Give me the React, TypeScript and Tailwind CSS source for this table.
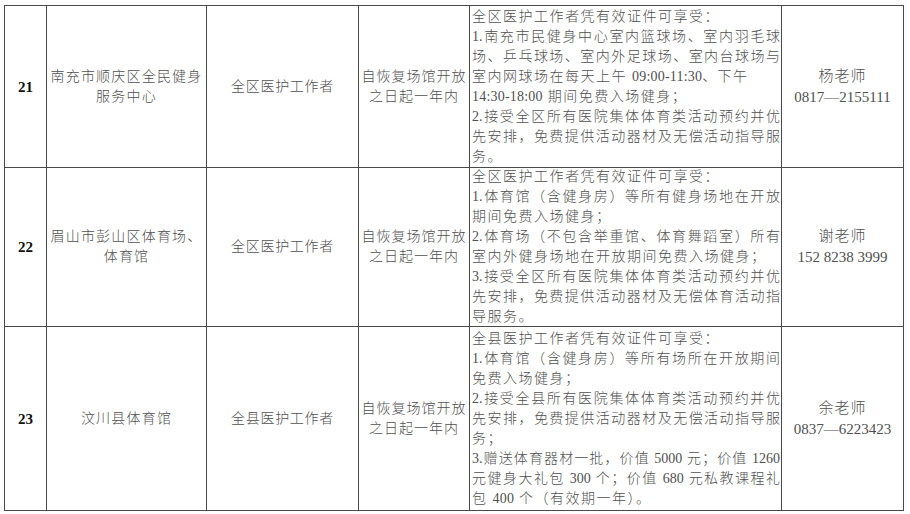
import React from "react";

type Ln = { t: string; full?: boolean };

const rows: {
  no: string;
  name: string[];
  who: string;
  contact: [string, string];
  lines: Ln[];
  h: string;
}[] = [
  {
    no: "21",
    name: ["南充市顺庆区全民健身", "服务中心"],
    who: "全区医护工作者",
    contact: ["杨老师", "0817—2155111"],
    h: "h-[162px]",
    lines: [
      { t: "全区医护工作者凭有效证件可享受：" },
      { t: "1.南充市民健身中心室内篮球场、室内羽毛球", full: true },
      { t: "场、乒乓球场、室内外足球场、室内台球场与", full: true },
      { t: "室内网球场在每天上午 09:00-11:30、下午" },
      { t: "14:30-18:00 期间免费入场健身；" },
      { t: "2.接受全区所有医院集体体育类活动预约并优", full: true },
      { t: "先安排，免费提供活动器材及无偿活动指导服", full: true },
      { t: "务。" },
    ],
  },
  {
    no: "22",
    name: ["眉山市彭山区体育场、", "体育馆"],
    who: "全区医护工作者",
    contact: ["谢老师", "152 8238 3999"],
    h: "h-[159px]",
    lines: [
      { t: "全区医护工作者凭有效证件可享受：" },
      { t: "1.体育馆（含健身房）等所有健身场地在开放", full: true },
      { t: "期间免费入场健身；" },
      { t: "2.体育场（不包含举重馆、体育舞蹈室）所有", full: true },
      { t: "室内外健身场地在开放期间免费入场健身；" },
      { t: "3.接受全区所有医院集体体育类活动预约并优", full: true },
      { t: "先安排，免费提供活动器材及无偿体育活动指", full: true },
      { t: "导服务。" },
    ],
  },
  {
    no: "23",
    name: ["汶川县体育馆"],
    who: "全县医护工作者",
    contact: ["余老师", "0837—6223423"],
    h: "h-[184px]",
    lines: [
      { t: "全县医护工作者凭有效证件可享受：" },
      { t: "1.体育馆（含健身房）等所有场所在开放期间", full: true },
      { t: "免费入场健身；" },
      { t: "2.接受全县所有医院集体体育类活动预约并优", full: true },
      { t: "先安排，免费提供活动器材及无偿活动指导服", full: true },
      { t: "务；" },
      { t: "3.赠送体育器材一批，价值 5000 元；价值 1260", full: true },
      { t: "元健身大礼包 300 个；价值 680 元私教课程礼", full: true },
      { t: "包 400 个（有效期一年）。" },
    ],
  },
];

function Mixed({ t }: { t: string }) {
  const parts = t.split(/([0-9:\-]+)/);
  return (
    <>
      {parts.map((p, i) =>
        /^[0-9:\-]+$/.test(p) ? (
          <span key={i} className="tracking-[0.2px]">
            {p}
          </span>
        ) : (
          <span key={i}>{p}</span>
        )
      )}
    </>
  );
}

const cell =
  "border-r border-b border-[#4a4a4a] flex flex-col items-center justify-center text-center";

export default function App() {
  return (
    <div className="w-[910px] h-[514px] bg-white overflow-hidden font-['Liberation_Serif','Noto_Sans_CJK_SC',serif] text-[14px] leading-[20px] text-[#505050] font-light">
      <div className="ml-[4px] mt-[5px] w-[900px] border-l border-t border-[#4a4a4a] grid grid-cols-[42px_160px_152px_111px_312px_122px]">
        {rows.map((r) => (
          <React.Fragment key={r.no}>
            <div className={`${cell} ${r.h} text-[15px] font-bold text-[#111]`}>{r.no}</div>
            <div className={`${cell} ${r.h} tracking-[1.2px]`}>
              {r.name.map((n) => (
                <div key={n} className="whitespace-nowrap">{n}</div>
              ))}
            </div>
            <div className={`${cell} ${r.h} tracking-[0.7px]`}>
              <div className="whitespace-nowrap">{r.who}</div>
            </div>
            <div className={`${cell} ${r.h} tracking-[1px]`}>
              <div className="whitespace-nowrap">自恢复场馆开放</div>
              <div className="whitespace-nowrap">之日起一年内</div>
            </div>
            <div className={`border-r border-b border-[#4a4a4a] ${r.h} flex flex-col justify-center pl-[2px] pr-[1px]`}>
              {r.lines.map((l, i) =>
                l.full ? (
                  <div key={i} className="text-justify [text-align-last:justify]">
                    {l.t}
                  </div>
                ) : (
                  <div key={i} className="whitespace-nowrap tracking-[1.5px]">
                    <Mixed t={l.t} />
                  </div>
                )
              )}
            </div>
            <div className={`${cell} ${r.h} text-[15px] leading-[21px]`}>
              <div className="whitespace-nowrap tracking-[1px]">{r.contact[0]}</div>
              <div className="whitespace-nowrap">{r.contact[1]}</div>
            </div>
          </React.Fragment>
        ))}
      </div>
    </div>
  );
}
